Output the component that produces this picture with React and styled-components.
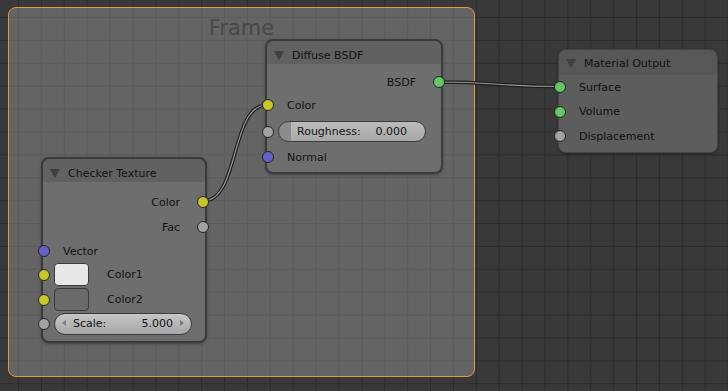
import React from 'react';
import styled, { createGlobalStyle } from 'styled-components';

const GlobalStyle = createGlobalStyle`
  html, body {
    margin: 0;
    padding: 0;
    background: #393939;
  }
  body {
    font-family: "DejaVu Sans", "Liberation Sans", sans-serif;
  }
`;

const Canvas = styled.div`
  position: relative;
  width: 728px;
  height: 391px;
  overflow: hidden;
  background-color: #393939;
  background-image:
    linear-gradient(to right, #2c2c2c 1px, transparent 1px),
    linear-gradient(to bottom, #2c2c2c 1px, transparent 1px);
  background-size: 22.9px 22.9px;
  background-position: 18px 17px;
`;

const Frame = styled.div`
  position: absolute;
  left: 8px;
  top: 7px;
  width: 467px;
  height: 370px;
  box-sizing: border-box;
  border: 1px solid #e39a3b;
  border-radius: 8px;
  background: rgba(180, 180, 180, 0.35);
  padding-top: 8px;
  text-align: center;
`;

const FrameLabel = styled.div`
  font-size: 21px;
  line-height: 24px;
  color: #484848;
`;

const Links = styled.svg`
  position: absolute;
  left: 0;
  top: 0;
  pointer-events: none;
`;

const Node = styled.div`
  position: absolute;
  left: ${p => p.$x}px;
  top: ${p => p.$y}px;
  width: ${p => p.$w}px;
  box-sizing: border-box;
  border: ${p => (p.$thick ? '2px solid #3b3b3b' : '1px solid #444444')};
  border-radius: 8px;
  background: ${p => p.$bg};
  box-shadow: 0 1px 3px rgba(0, 0, 0, 0.3);
  display: flex;
  flex-direction: column;
  font-size: 11px;
  line-height: 13px;
  color: #121212;
`;

const Header = styled.div`
  height: ${p => p.$h}px;
  box-sizing: border-box;
  padding: ${p => p.$pt}px 0 0 7px;
  display: flex;
  align-items: center;
  gap: 8px;
  background: rgba(25, 25, 35, ${p => p.$shade});
  border-radius: 6px 6px 0 0;
`;

const Body = styled.div`
  display: flex;
  flex-direction: column;
  padding: ${p => p.$pt}px 0 ${p => p.$pb}px;
`;

const Row = styled.div`
  position: relative;
  height: ${p => p.$h}px;
  display: flex;
  align-items: center;
  justify-content: ${p => (p.$out ? 'flex-end' : 'flex-start')};
  padding: ${p => (p.$out ? '0 25px 0 0' : '0 0 0 20px')};
`;

const WidgetRow = styled(Row)`
  padding: 0 0 0 11px;
`;

const Socket = styled.span`
  position: absolute;
  top: 50%;
  ${p => (p.$out ? 'right: -3.5px;' : 'left: -5.5px;')}
  width: 12px;
  height: 12px;
  margin-top: -6px;
  box-sizing: border-box;
  border-radius: 50%;
  border: 1px solid #262626;
  background: ${p => p.$color};
`;

const Slider = styled.div`
  width: ${p => p.$w}px;
  height: ${p => p.$h}px;
  box-sizing: border-box;
  position: relative;
  border: 1px solid #3a3a3a;
  border-radius: 11px;
  padding: 0 18px;
  display: flex;
  align-items: center;
  justify-content: space-between;
  background: ${p =>
    p.$capped
      ? 'linear-gradient(to right, #8c8c8c 0 12px, transparent 12px), linear-gradient(#bcbcbc, #a8a8a8)'
      : 'linear-gradient(#c6c6c6, #a6a6a6)'};
`;

const Arrow = styled.span`
  position: absolute;
  top: 50%;
  margin-top: -3.5px;
  width: 0;
  height: 0;
  border-top: 3.5px solid transparent;
  border-bottom: 3.5px solid transparent;
  ${p =>
    p.$right
      ? 'right: 7px; border-left: 4px solid #7c7c7c;'
      : 'left: 7px; border-right: 4px solid #7c7c7c;'}
`;

const Swatch = styled.span`
  width: 35px;
  height: 23px;
  box-sizing: border-box;
  border: 1px solid #3c3c3c;
  border-radius: 4px;
  background: ${p => p.$color};
`;

const SwatchLabel = styled.span`
  margin-left: 18px;
`;

const SOCK = {
  color: '#c7c729',
  gray: '#a3a3a3',
  vector: '#6363c7',
  shader: '#63c763',
};

const Triangle = () => (
  <svg width="10" height="9" viewBox="0 0 10 9">
    <path d="M0 0 L10 0 L5 9 Z" fill="#3f3f3f" />
  </svg>
);

const Link = ({ d }) => (
  <g fill="none">
    <path d={d} stroke="#1f1f1f" strokeWidth="3.6" />
    <path d={d} stroke="#969696" strokeWidth="1.2" />
  </g>
);

const Input = ({ h, color, children }) => (
  <Row $h={h}>
    <Socket $color={color} />
    {children}
  </Row>
);

const Output = ({ h, color, children }) => (
  <Row $h={h} $out>
    {children}
    <Socket $color={color} $out />
  </Row>
);

export default function App() {
  return (
    <>
      <GlobalStyle />
      <Canvas>
        <Frame>
          <FrameLabel>Frame</FrameLabel>
        </Frame>

        <Links width="728" height="391" viewBox="0 0 728 391">
          <Link d="M203 201 C 240 201, 230 105, 267 105" />
          <Link d="M439 82 C 498 82, 499 86.5, 558 86.5" />
        </Links>

        <Node $x={265} $y={39} $w={178} $bg="#6e6e6e" $thick>
          <Header $h={23} $pt={6} $shade={0.15}>
            <Triangle />
            <span>Diffuse BSDF</span>
          </Header>
          <Body $pt={7} $pb={4}>
            <Output h={22} color={SOCK.shader}>BSDF</Output>
            <Input h={24} color={SOCK.color}>Color</Input>
            <WidgetRow $h={29}>
              <Socket $color={SOCK.gray} />
              <Slider $w={148} $h={21} $capped>
                <span>Roughness:</span>
                <span>0.000</span>
              </Slider>
            </WidgetRow>
            <Input h={22} color={SOCK.vector}>Normal</Input>
          </Body>
        </Node>

        <Node $x={41} $y={157} $w={166} $bg="#6e6e6e" $thick>
          <Header $h={23} $pt={6} $shade={0.15}>
            <Triangle />
            <span>Checker Texture</span>
          </Header>
          <Body $pt={8} $pb={6}>
            <Output h={24} color={SOCK.color}>Color</Output>
            <Output h={26} color={SOCK.gray}>Fac</Output>
            <Input h={22} color={SOCK.vector}>Vector</Input>
            <WidgetRow $h={25}>
              <Socket $color={SOCK.color} />
              <Swatch $color="#e8e8e8" />
              <SwatchLabel>Color1</SwatchLabel>
            </WidgetRow>
            <WidgetRow $h={25}>
              <Socket $color={SOCK.color} />
              <Swatch $color="#6a6a6a" />
              <SwatchLabel>Color2</SwatchLabel>
            </WidgetRow>
            <WidgetRow $h={23}>
              <Socket $color={SOCK.gray} />
              <Slider $w={138} $h={22}>
                <Arrow />
                <span>Scale:</span>
                <span>5.000</span>
                <Arrow $right />
              </Slider>
            </WidgetRow>
          </Body>
        </Node>

        <Node $x={558} $y={49} $w={160} $bg="#5d5d5d">
          <Header $h={25} $pt={1} $shade={0.08}>
            <Triangle />
            <span>Material Output</span>
          </Header>
          <Body $pt={0} $pb={4}>
            <Input h={24} color={SOCK.shader}>Surface</Input>
            <Input h={25} color={SOCK.shader}>Volume</Input>
            <Input h={24} color={SOCK.gray}>Displacement</Input>
          </Body>
        </Node>
      </Canvas>
    </>
  );
}
